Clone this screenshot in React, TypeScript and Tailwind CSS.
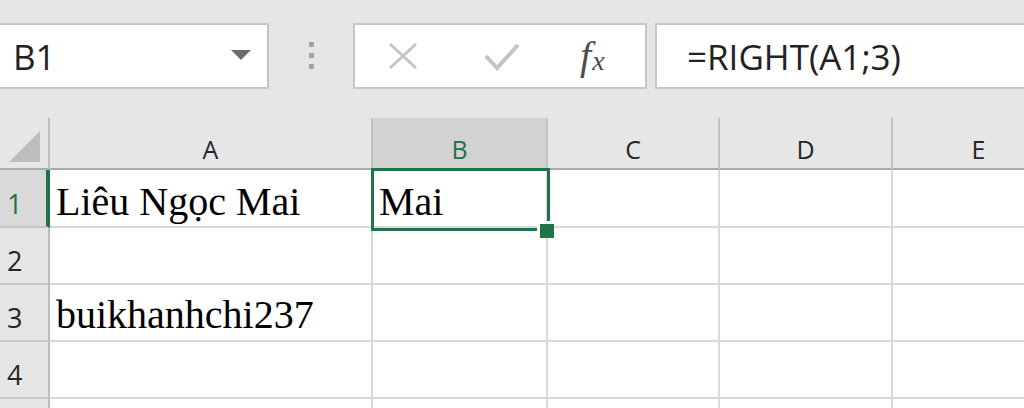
import React from "react";

const columns = [
  { label: "A", width: "w-[323px]" },
  { label: "B", width: "w-[175px]" },
  { label: "C", width: "w-[172px]" },
  { label: "D", width: "w-[173px]" },
  { label: "E", width: "w-[173px]" },
];

// row 5 is only a sliver at the bottom edge, so its number isn't shown
const rows = [
  { n: "1", height: "h-[58px]", cells: ["Liêu Ngọc Mai", "Mai", "", "", ""], pad: "pb-[4px]" },
  { n: "2", height: "h-[57px]", cells: ["", "", "", "", ""], pad: "pb-[4px]" },
  { n: "3", height: "h-[57px]", cells: ["buikhanhchi237", "", "", "", ""], pad: "pb-[5px]" },
  { n: "4", height: "h-[57px]", cells: ["", "", "", "", ""], pad: "pb-[4px]" },
  { n: "", height: "h-[57px]", cells: ["", "", "", "", ""], pad: "pb-[4px]" },
];

const uiFont = { fontFamily: '"Open Sans", "Noto Sans", sans-serif' };
const cellFont = { fontFamily: '"Liberation Serif", "Times New Roman", serif' };

function FormulaBar() {
  return (
    <div className="h-[118px] bg-[#e6e6e6] pt-[23px] flex items-start" style={uiFont}>
      {/* Name box */}
      <div className="w-[269px] h-[66px] bg-white border-y-2 border-r-2 border-[#c6c6c6] flex items-center justify-between pl-[13px] pr-[16px]">
        <span className="text-[35px] leading-[35px] text-[#222]">B1</span>
        <svg width="20" height="10" viewBox="0 0 20 10" className="mb-[2px]">
          <polygon points="0,0 20,0 10,10" fill="#6d6d6d" />
        </svg>
      </div>

      {/* grip dots */}
      <div className="w-[84px] h-[66px] flex flex-col items-center justify-center gap-[6px] pb-[2px]">
        <div className="w-[5px] h-[5px] bg-[#a3a3a3]" />
        <div className="w-[5px] h-[5px] bg-[#a3a3a3]" />
        <div className="w-[5px] h-[5px] bg-[#a3a3a3]" />
      </div>

      {/* cancel / enter / fx */}
      <div className="w-[294px] h-[66px] bg-white border-2 border-[#c6c6c6] flex items-center">
        <svg width="30" height="28" viewBox="0 0 30 28" className="ml-[33px]">
          <path d="M2 2 L28 26 M28 2 L2 26" stroke="#c4c4c4" strokeWidth="3" fill="none" />
        </svg>
        <svg width="36" height="30" viewBox="0 0 36 30" className="ml-[66px] mt-[2px]">
          <path d="M2 14 L13 26 L34 3" stroke="#c4c4c4" strokeWidth="4" fill="none" />
        </svg>
        <div className="ml-[60px] flex items-baseline text-[#4d4d4d]" style={cellFont}>
          <span className="italic text-[40px] leading-[40px]">f</span>
          <span className="italic text-[28px] leading-[28px] ml-[1px] translate-y-[1px]">x</span>
        </div>
      </div>

      {/* formula */}
      <div className="ml-[8px] flex-1 h-[66px] bg-white border-y-2 border-l-2 border-[#c6c6c6] flex items-center pl-[30px]">
        <span className="text-[35px] leading-[35px] text-[#222]">=RIGHT(A1;3)</span>
      </div>
    </div>
  );
}

function Sheet() {
  return (
    <div className="relative bg-white">
      {/* column headers */}
      <div className="flex h-[52px] bg-[#e6e6e6]" style={uiFont}>
        <div className="w-[50px] shrink-0 border-r-2 border-r-[#bcbcbc] border-b-2 border-b-[#ababab] flex items-end justify-end pr-[8px] pb-[6px]">
          <svg width="31" height="31" viewBox="0 0 31 31">
            <polygon points="31,0 31,31 0,31" fill="#bdbdbd" />
          </svg>
        </div>
        {columns.map((col) => {
          const selected = col.label === "B";
          return (
            <div
              key={col.label}
              className={`${col.width} shrink-0 border-r-2 border-r-[#c3c3c3] border-b-2 border-b-[#ababab] flex items-center justify-center pt-[12px] text-[25px] leading-[25px] ${
                selected ? "bg-[#d2d2d2] text-[#217346]" : "text-[#262626]"
              }`}
            >
              {col.label}
            </div>
          );
        })}
      </div>

      {/* rows */}
      {rows.map((row, r) => {
        const selected = row.n === "1";
        return (
          <div key={r} className={`flex ${row.height}`}>
            <div
              className={`w-[50px] shrink-0 border-b-2 border-b-[#c8c8c8] flex items-center pl-[7px] pt-[10px] text-[27px] leading-[27px] ${
                selected
                  ? "bg-[#d9d9d9] text-[#217346] border-r-[4px] border-r-[#217346]"
                  : "bg-[#e6e6e6] text-[#262626] border-r-2 border-r-[#bcbcbc]"
              }`}
              style={uiFont}
            >
              {row.n}
            </div>
            {columns.map((col, i) => (
              <div
                key={col.label}
                className={`${col.width} shrink-0 border-r-2 border-b-2 border-[#d9d9d9] flex items-end pl-[6px] ${row.pad} text-[40px] leading-[40px] text-black whitespace-nowrap`}
                style={cellFont}
              >
                {row.cells[i]}
              </div>
            ))}
          </div>
        );
      })}

      {/* active cell B1 */}
      <div className="absolute left-[371px] top-[50px] w-[179px] h-[63px] border-[3px] border-[#217346]" />
      <div className="absolute left-[537px] top-[103px] w-[17px] h-[17px] bg-white flex items-end justify-end">
        <div className="w-[14px] h-[14px] bg-[#217346]" />
      </div>
    </div>
  );
}

export default function App() {
  return (
    <div className="w-[1024px] h-[408px] overflow-hidden bg-white">
      <FormulaBar />
      <Sheet />
    </div>
  );
}
